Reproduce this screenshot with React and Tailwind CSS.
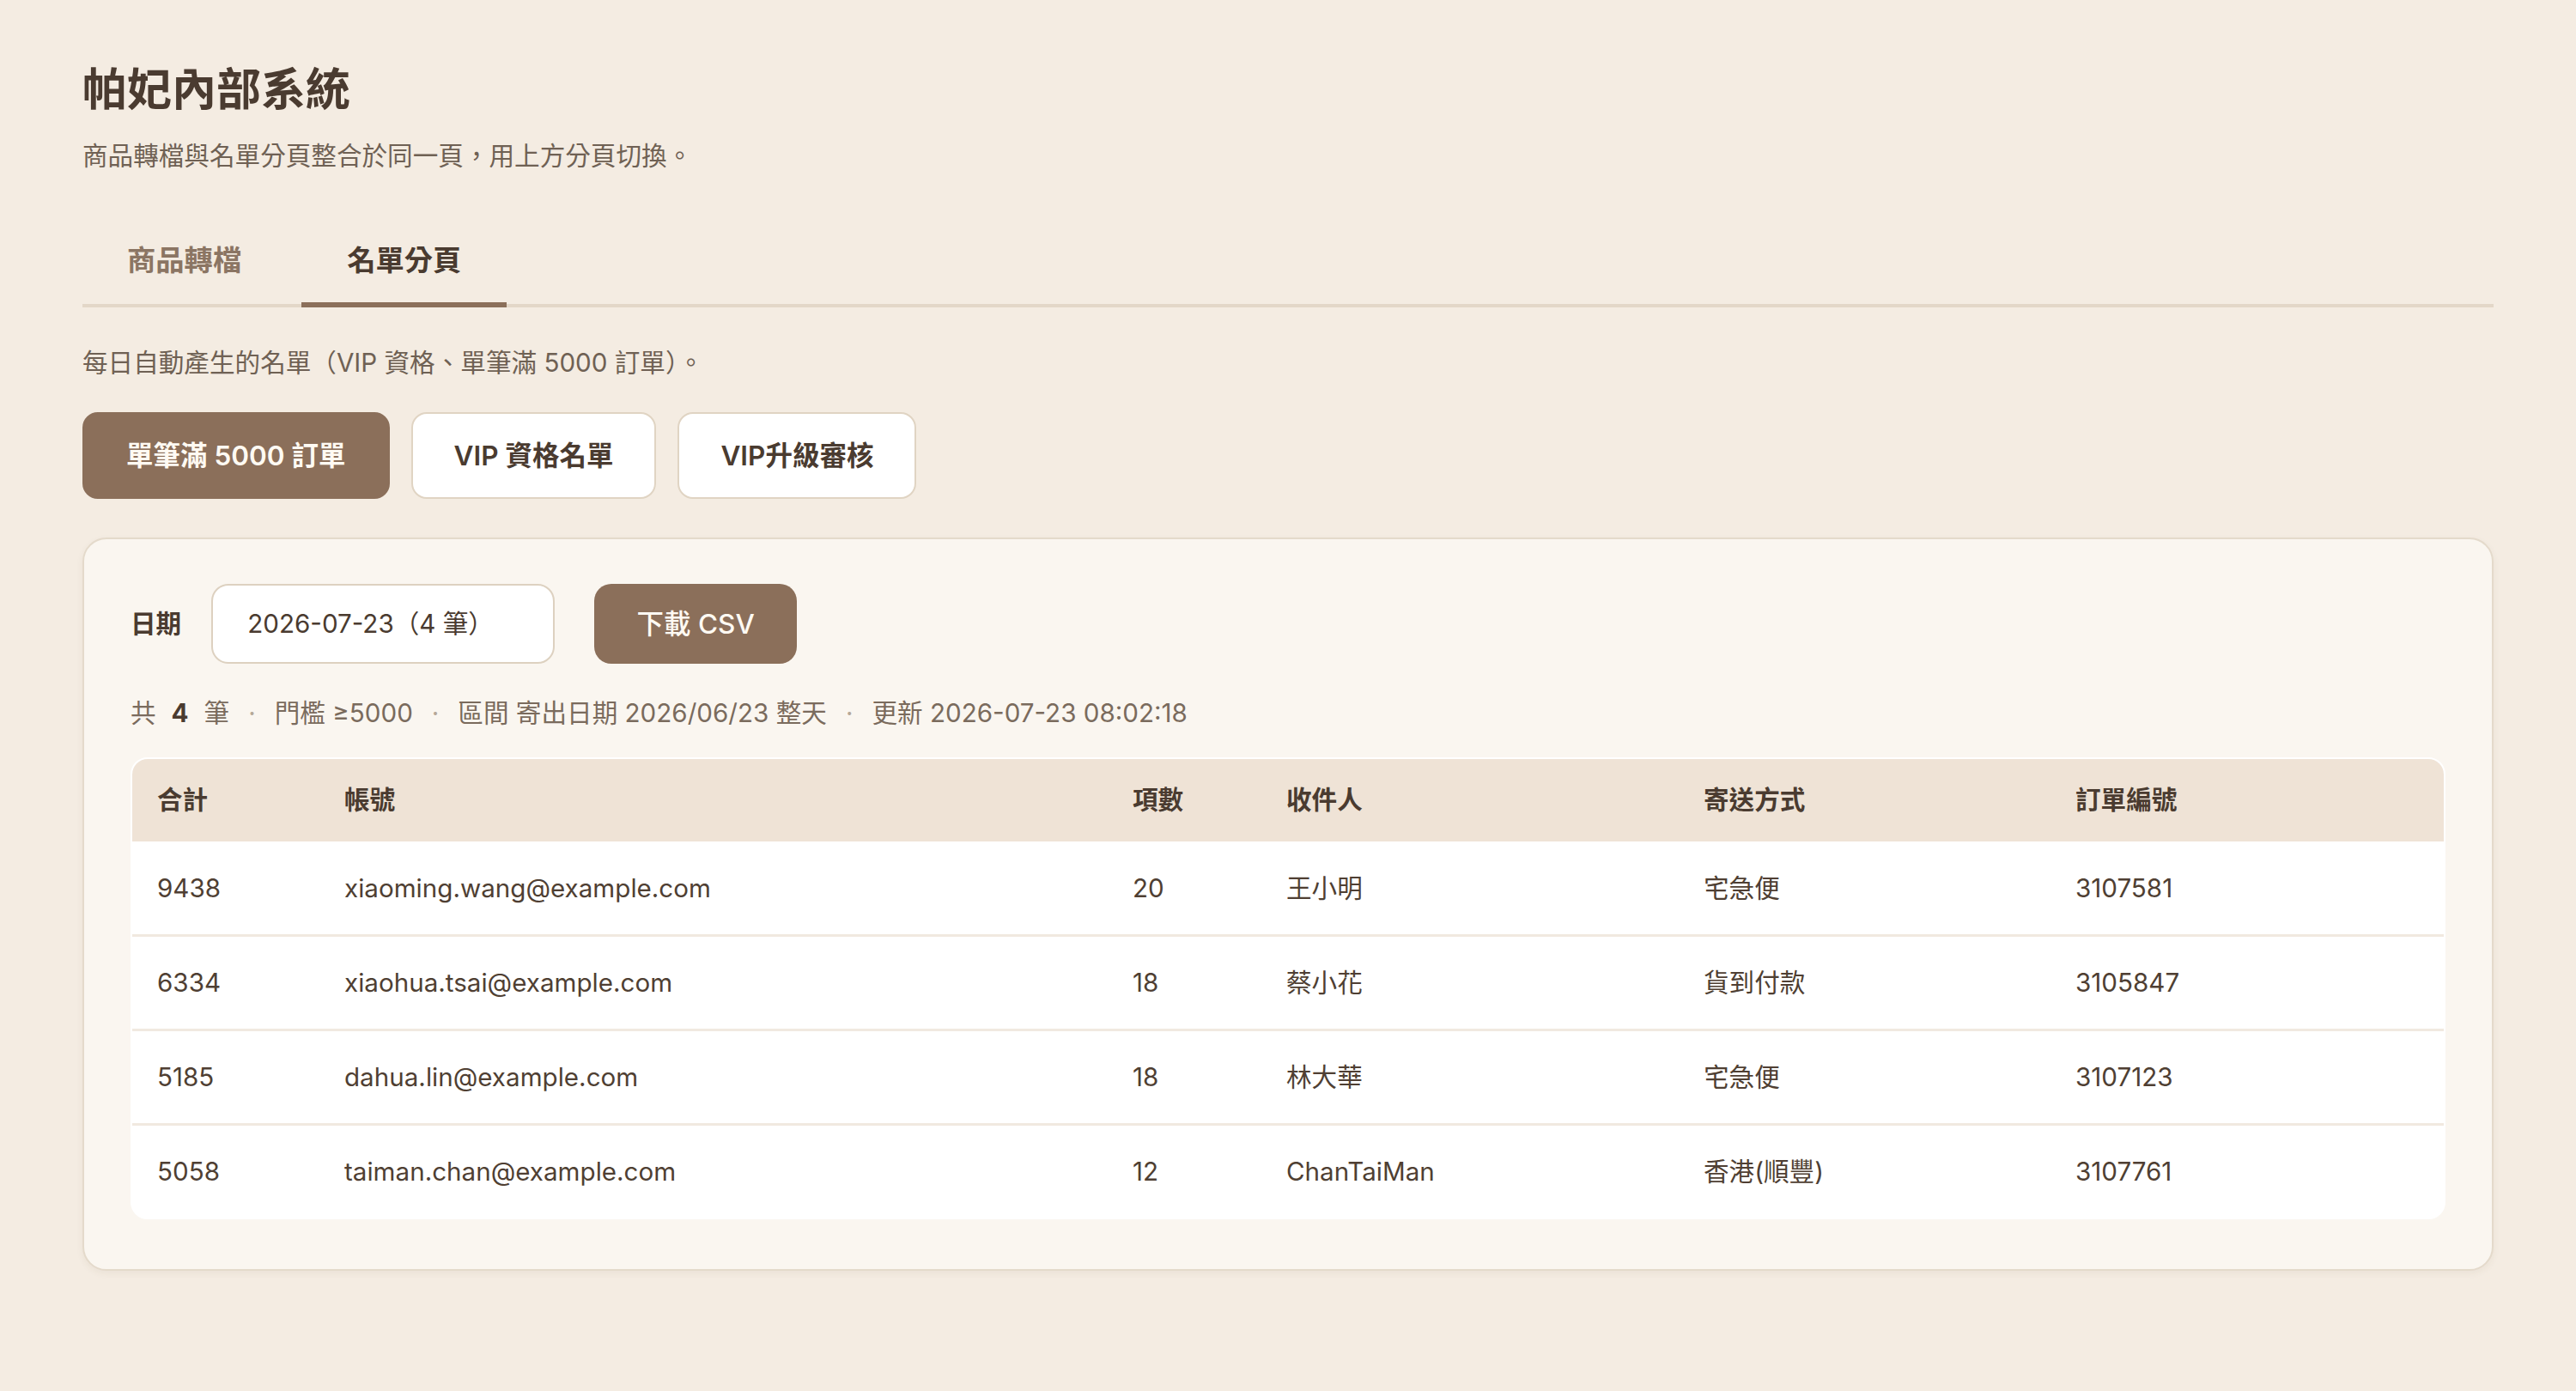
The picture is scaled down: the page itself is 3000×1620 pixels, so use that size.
const rows = [
  { total: '9438', account: 'xiaoming.wang@example.com', items: '20', name: '王小明', ship: '宅急便', order: '3107581' },
  { total: '6334', account: 'xiaohua.tsai@example.com', items: '18', name: '蔡小花', ship: '貨到付款', order: '3105847' },
  { total: '5185', account: 'dahua.lin@example.com', items: '18', name: '林大華', ship: '宅急便', order: '3107123' },
  { total: '5058', account: 'taiman.chan@example.com', items: '12', name: 'ChanTaiMan', ship: '香港(順豐)', order: '3107761' },
]

const columns = [
  { label: '合計', width: 'w-[218px]' },
  { label: '帳號', width: 'w-[918px]' },
  { label: '項數', width: 'w-[179px]' },
  { label: '收件人', width: 'w-[486px]' },
  { label: '寄送方式', width: 'w-[433px]' },
  { label: '訂單編號', width: '' },
]

const listTabs = ['單筆滿 5000 訂單', 'VIP 資格名單', 'VIP升級審核']

function Dot() {
  return <span className="mx-[22px] text-[#b5a898]">·</span>
}

export default function App() {
  return (
    <div className="min-h-[1620px] bg-[#f4ece2] px-[96px] pt-[74px] text-[#4a3b30] font-[Inter,'Noto_Sans_CJK_TC',sans-serif]">
      <h1 className="text-[52px] leading-[1.2] font-bold text-[#4a3b30]">帕妃內部系統</h1>
      <p className="mt-[23px] text-[29.6px] leading-[1.5] text-[#6f6154]">
        商品轉檔與名單分頁整合於同一頁，用上方分頁切換。
      </p>

      <div className="mt-[52px] flex gap-[18px] border-b-4 border-[#e3d7c8]">
        <button className="-mb-[4px] border-b-[6px] border-transparent px-[52px] pt-[23px] pb-[23px] text-[33.3px] leading-[1.5] font-semibold text-[#8b7563]">
          商品轉檔
        </button>
        <button className="-mb-[4px] border-b-[6px] border-[#8b6f5a] px-[53px] pt-[23px] pb-[23px] text-[33.3px] leading-[1.5] font-bold text-[#4a3b30]">
          名單分頁
        </button>
      </div>

      <p className="mt-[42px] text-[29.6px] leading-[1.5] text-[#6f6154]">
        每日自動產生的名單（VIP 資格、單筆滿 5000 訂單）。
      </p>

      <div className="mt-[36px] flex gap-[25px]">
        {listTabs.map((t, i) => (
          <button
            key={t}
            className={
              i === 0
                ? 'h-[101px] rounded-[18px] border-2 border-[#8b6f5a] bg-[#8b6f5a] px-[49px] text-[31.5px] font-semibold text-[#fffaf3]'
                : 'h-[101px] rounded-[18px] border-2 border-[#e0d4c3] bg-white px-[48px] text-[31.5px] font-semibold text-[#4a3b30]'
            }
          >
            {t}
          </button>
        ))}
      </div>

      <div className="mt-[45px] rounded-[28px] border-2 border-[#e4dacb] bg-[#faf6f0] px-[54px] pt-[52px] pb-[58px] shadow-[0_3px_8px_rgba(90,60,30,0.06)]">
        <div className="flex items-center">
          <span className="text-[29.6px] font-bold text-[#4a3b30]">日期</span>
          <div className="ml-[35px] flex h-[93px] w-[400px] items-center rounded-[20px] border-2 border-[#ddd1c0] bg-white pl-[40px] text-[29.6px] text-[#4a3b30]">
            2026-07-23（4 筆）
          </div>
          <button className="ml-[46px] h-[93px] w-[236px] rounded-[20px] bg-[#8b6f5a] text-[31.5px] font-medium text-[#fffaf3]">
            下載 CSV
          </button>
        </div>

        <div className="mt-[35px] text-[29.6px] leading-[1.5] text-[#7a6b5d]">
          <span>共</span>
          <span className="mx-[18px] font-bold text-[#4a3b30]">4</span>
          <span>筆</span>
          <Dot />
          <span>門檻 ≥5000</span>
          <Dot />
          <span>區間 寄出日期 2026/06/23 整天</span>
          <Dot />
          <span>更新 2026-07-23 08:02:18</span>
        </div>

        <div className="mt-[29px] overflow-hidden rounded-[20px] border-2 border-white bg-white">
          <table className="w-full table-fixed border-collapse text-left">
            <thead>
              <tr className="h-[96px] bg-[#efe3d6]">
                {columns.map((c) => (
                  <th key={c.label} className={`${c.width} pl-[29px] text-[29.6px] font-bold text-[#4a3b30]`}>
                    {c.label}
                  </th>
                ))}
              </tr>
            </thead>
            <tbody>
              {rows.map((r, i) => (
                <tr key={r.order} className={i < rows.length - 1 ? 'h-[110px] border-b-[3px] border-[#f1e9e0]' : 'h-[108px]'}>
                  <td className="pl-[29px] text-[29.6px] text-[#4f3f33]">{r.total}</td>
                  <td className="pl-[29px] text-[29.6px] text-[#4f3f33]">{r.account}</td>
                  <td className="pl-[29px] text-[29.6px] text-[#4f3f33]">{r.items}</td>
                  <td className="pl-[29px] text-[29.6px] text-[#4f3f33]">{r.name}</td>
                  <td className="pl-[29px] text-[29.6px] text-[#4f3f33]">{r.ship}</td>
                  <td className="pl-[29px] text-[29.6px] text-[#4f3f33]">{r.order}</td>
                </tr>
              ))}
            </tbody>
          </table>
        </div>
      </div>
    </div>
  )
}
